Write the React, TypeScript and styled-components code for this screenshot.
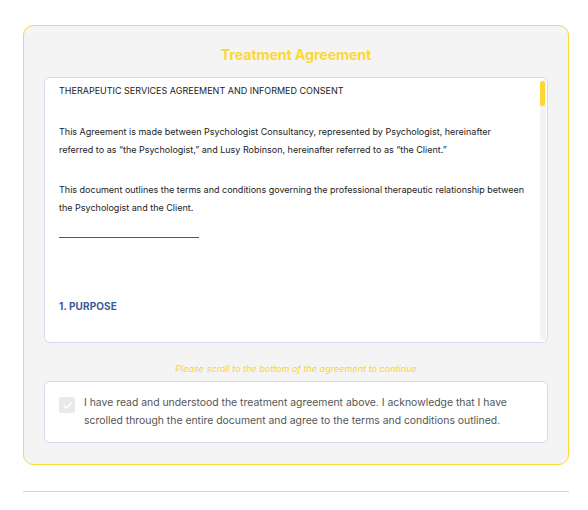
import styled, { createGlobalStyle } from "styled-components";

const GlobalStyle = createGlobalStyle`
    html, body {
        margin: 0;
        padding: 0;
        background: #ffffff;
        font-family: Inter, "Noto Sans", sans-serif;
    }
    * {
        box-sizing: border-box;
    }
`;

const Page = styled.div`
    padding: 25px 19px 0 23px;
`;

const Card = styled.section`
    background-color: #f4f4f4;
    border: 1px solid #fcd934;
    border-radius: 10px;
    padding: 19px 20px 21px;
    display: flex;
    flex-direction: column;
`;

const Title = styled.h2`
    margin: 0 0 12px;
    text-align: center;
    color: #fdd835;
    font-size: 14.4px;
    line-height: 20px;
    font-weight: 700;
    letter-spacing: -0.2px;
`;

const ScrollFrame = styled.div`
    position: relative;
    height: 266px;
    background: #ffffff;
    border: 1px solid #dcd6f0;
    border-radius: 6px;
    overflow: hidden;
`;

const ScrollBox = styled.div`
    height: 100%;
    overflow-y: scroll;
    padding: 4px 21px 0 14px;
    color: #222;
    scrollbar-width: none;

    &::-webkit-scrollbar {
        display: none;
    }
`;

// native scrollbars are hidden in the screenshot, so the bar is drawn over the box
const Track = styled.div`
    position: absolute;
    top: 2px;
    bottom: 2px;
    right: 1px;
    width: 6px;
    border-radius: 3px;
    background: #f3f3f3;
`;

const Thumb = styled.div`
    position: absolute;
    top: 1px;
    left: 0;
    width: 5px;
    height: 25px;
    border-radius: 3px;
    background: #fdd835;
`;

const Para = styled.p<{ $gap?: number }>`
    margin: 0 0 ${props => props.$gap ?? 22}px;
    font-size: 9px;
    line-height: 18px;
`;

const Rule = styled.div`
    width: 140px;
    border-bottom: 1px solid #555;
    margin: 20px 0 0;
    height: 0;
`;

const Heading = styled.h3`
    margin: 59px 0 30px;
    font-size: 10px;
    line-height: 18px;
    font-weight: 700;
    color: #3c5a99;
    letter-spacing: 0.1px;
`;

const Hint = styled.p`
    margin: 20px 0 6px;
    text-align: center;
    color: #fdd52a;
    font-size: 9.1px;
    line-height: 12px;
    font-style: italic;
`;

const ConsentBox = styled.div`
    display: flex;
    align-items: flex-start;
    gap: 9px;
    background: #ffffff;
    border: 1px solid #dcd6f0;
    border-radius: 6px;
    padding: 12px 14px;
    cursor: not-allowed;
`;

const Check = styled.span`
    flex: none;
    width: 16px;
    height: 16px;
    margin-top: 3px;
    border-radius: 3px;
    background: #e9e9e9;
    display: flex;
    align-items: center;
    justify-content: center;
`;

const ConsentText = styled.p`
    margin: 0;
    font-size: 10.4px;
    line-height: 18px;
    color: #555;
`;

const Divider = styled.hr`
    margin: 26px 0 0;
    border: none;
    border-top: 1px solid #d4d0e4;
`;

const sections = [
    {
        title: "1. PURPOSE",
        paras: [
            "The purpose of this Agreement is to establish a clear understanding of the therapeutic services provided, the responsibilities of both parties, and the policies that apply throughout the course of treatment.",
            "Therapy is a collaborative process that aims to support the Client in improving emotional well-being, developing coping strategies, and addressing the concerns that brought the Client to therapy.",
        ],
    },
    {
        title: "2. SERVICES PROVIDED",
        paras: [
            "The Psychologist will provide individual psychological assessment and psychotherapy sessions. Sessions are typically 50 minutes in length and are scheduled at a frequency agreed upon by both parties.",
            "The specific approach, goals, and duration of therapy will be discussed and reviewed regularly between the Psychologist and the Client.",
        ],
    },
    {
        title: "3. CONFIDENTIALITY",
        paras: [
            "All information shared during sessions is confidential and will not be disclosed without the written consent of the Client, except where required by law.",
            "Exceptions include situations where there is a serious risk of harm to the Client or others, suspected abuse of a child or vulnerable adult, or a court order requiring disclosure.",
        ],
    },
    {
        title: "4. FEES AND PAYMENT",
        paras: [
            "Fees for services are agreed upon prior to the commencement of therapy. Payment is due at the time of each session unless other arrangements have been made in writing.",
            "The Psychologist reserves the right to review fees annually, and the Client will be informed of any changes in advance.",
        ],
    },
    {
        title: "5. CANCELLATIONS",
        paras: [
            "The Client agrees to provide at least 24 hours notice when cancelling or rescheduling an appointment. Late cancellations or missed sessions may be charged at the full session fee.",
        ],
    },
    {
        title: "6. COMMUNICATION",
        paras: [
            "Communication outside of sessions should be limited to scheduling matters. The Psychologist is not available for emergency support between sessions.",
            "In case of an emergency, the Client should contact local emergency services or go to the nearest hospital.",
        ],
    },
    {
        title: "7. RECORDS",
        paras: [
            "The Psychologist will keep secure records of sessions in accordance with professional and legal requirements. The Client may request access to their records in writing.",
        ],
    },
    {
        title: "8. TERMINATION",
        paras: [
            "Either party may end the therapeutic relationship at any time. Where possible, a final session will be arranged to review progress and discuss further support.",
        ],
    },
    {
        title: "9. CONSENT",
        paras: [
            "By signing this Agreement, the Client confirms that they have read and understood its terms, have had the opportunity to ask questions, and consent to receive therapeutic services.",
        ],
    },
];

function App() {
    return (
        <Page>
            <GlobalStyle />
            <Card>
                <Title>Treatment Agreement</Title>
                <ScrollFrame>
                    <ScrollBox>
                        <Para $gap={23}>THERAPEUTIC SERVICES AGREEMENT AND INFORMED CONSENT</Para>
                        <Para>
                            This Agreement is made between Psychologist Consultancy, represented by Psychologist, hereinafter
                            referred to as “the Psychologist,” and Lusy Robinson, hereinafter referred to as “the Client.”
                        </Para>
                        <Para $gap={0}>
                            This document outlines the terms and conditions governing the professional therapeutic relationship between
                            the Psychologist and the Client.
                        </Para>
                        <Rule />
                        {sections.map(section => (
                            <div key={section.title}>
                                <Heading>{section.title}</Heading>
                                {section.paras.map((text, i) => (
                                    <Para key={i}>{text}</Para>
                                ))}
                            </div>
                        ))}
                    </ScrollBox>
                    <Track>
                        <Thumb />
                    </Track>
                </ScrollFrame>
                <Hint>Please scroll to the bottom of the agreement to continue</Hint>
                <ConsentBox>
                    <Check>
                        <svg width="11" height="11" viewBox="0 0 24 24" fill="none" stroke="#ffffff" strokeWidth="3.5" strokeLinecap="round" strokeLinejoin="round">
                            <polyline points="4 12.5 9.5 18 20 6.5" />
                        </svg>
                    </Check>
                    <ConsentText>
                        I have read and understood the treatment agreement above. I acknowledge that I have
                        scrolled through the entire document and agree to the terms and conditions outlined.
                    </ConsentText>
                </ConsentBox>
            </Card>
            <Divider />
        </Page>
    );
}

export default App;
